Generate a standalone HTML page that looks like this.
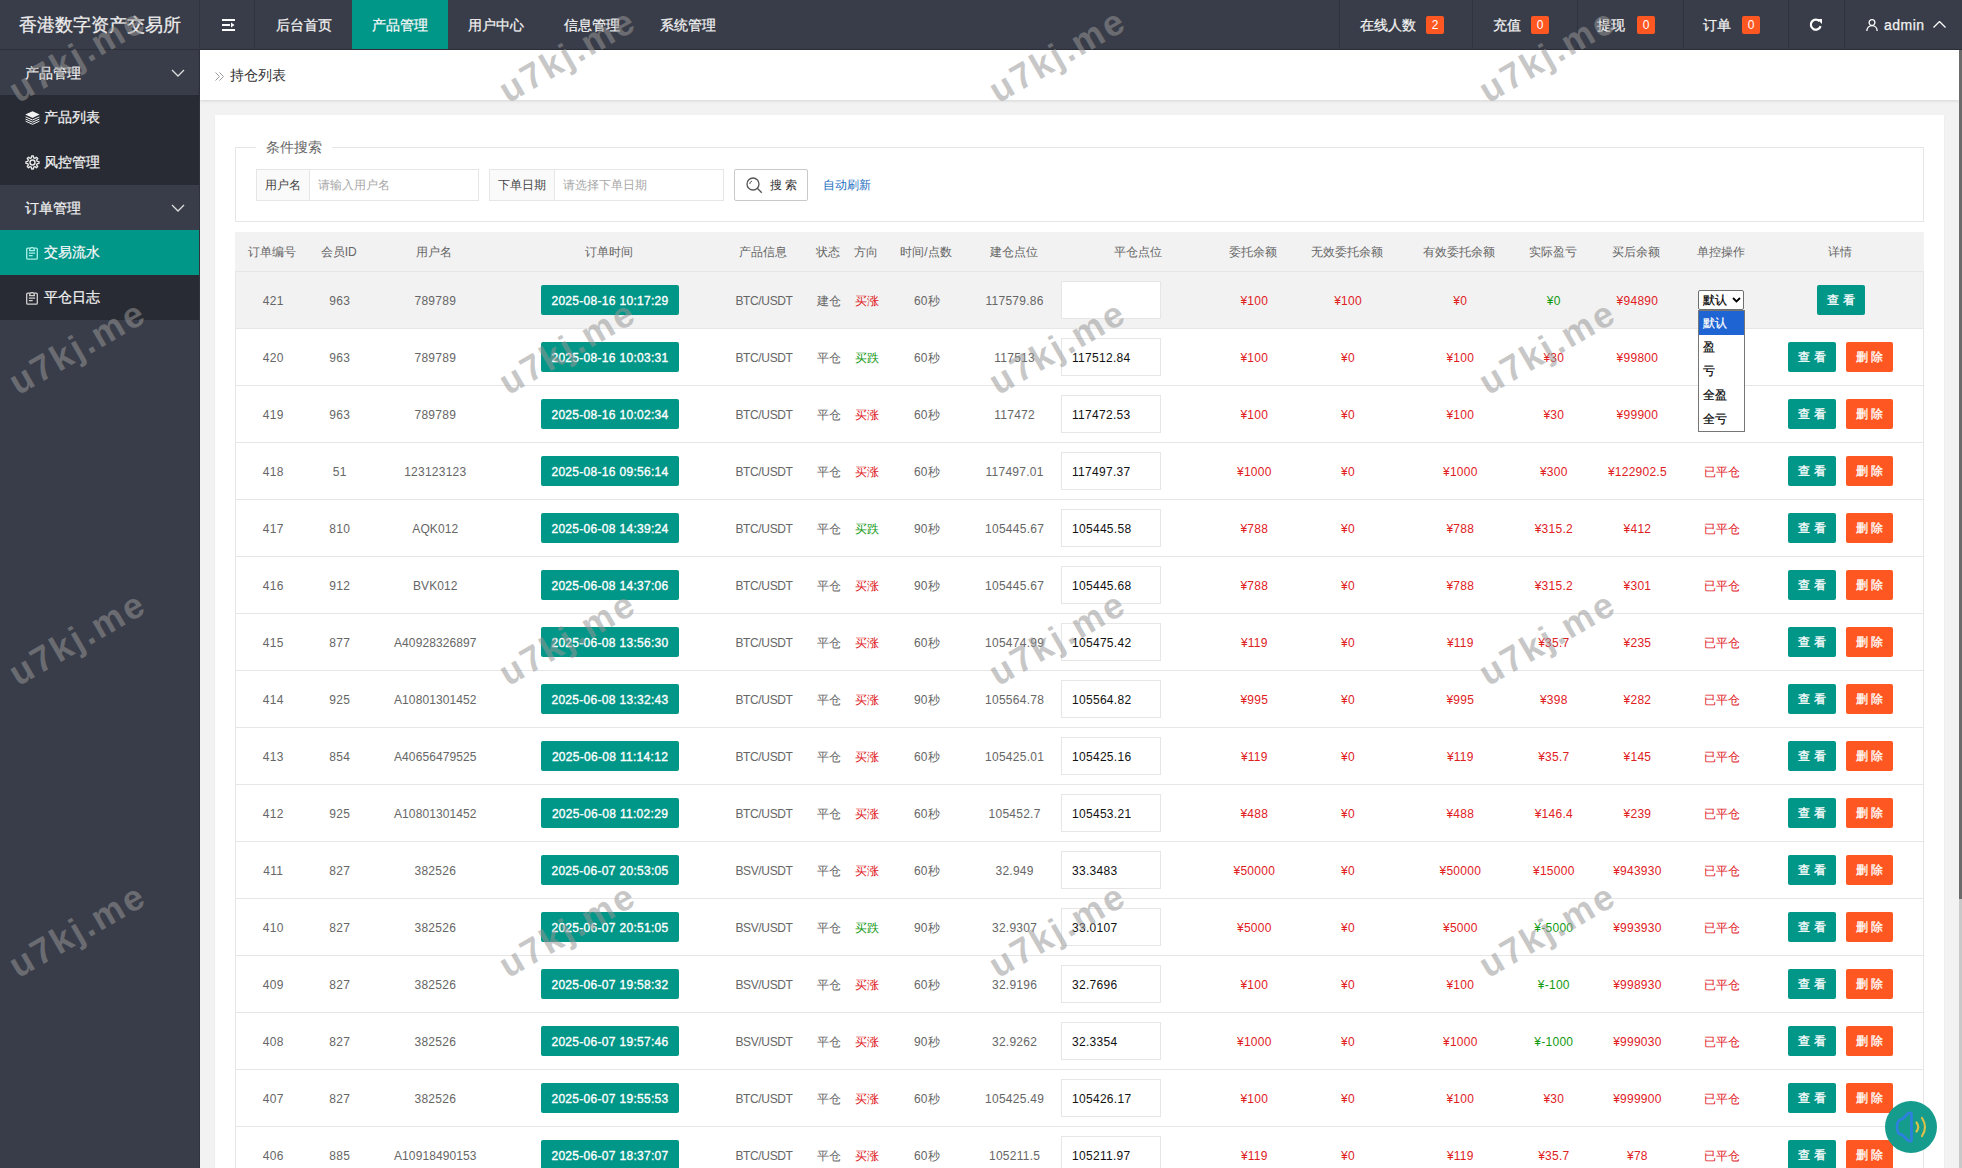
<!DOCTYPE html>
<html><head><meta charset="utf-8">
<style>
*{box-sizing:border-box;margin:0;padding:0}
html,body{width:1962px;height:1168px;overflow:hidden;background:#f2f2f2;font-family:"Liberation Sans",sans-serif;color:#666}
.abs{position:absolute}
#header{position:absolute;left:0;top:0;width:1962px;height:50px;background:#393D49;border-bottom:1px solid #2c2f38}
#logo{position:absolute;left:0;top:1px;width:200px;height:49px;line-height:49px;text-align:center;color:#ececec;font-size:18px;-webkit-text-stroke:.3px #ececec}
.vsep{position:absolute;top:0;width:1px;height:48px;background:#30333e}
.nav{position:absolute;top:0;height:49px;line-height:50px;font-size:14px;color:#f2f2f2;text-align:center;-webkit-text-stroke:.25px #f2f2f2}
.nav.act{background:#009688;color:#fff}
.badge{position:absolute;top:16px;width:18px;height:18px;line-height:18px;background:#FF5722;color:#fff;font-size:12px;text-align:center;border-radius:2px}
#side{position:absolute;left:0;top:50px;width:200px;height:1118px;background:#393D49}
.grp{position:absolute;left:0;width:200px;height:45px;line-height:46px;font-size:14px;color:#f0f0f0;padding-left:25px;-webkit-text-stroke:.25px #f0f0f0}
.child{position:absolute;left:0;width:200px;height:45px;line-height:45px;font-size:14px;color:#f0f0f0;background:#282B33;padding-left:44px;-webkit-text-stroke:.25px #f0f0f0}
.child.act{background:#009688;color:#fff}
.child svg{position:absolute;left:25px}
.chev{position:absolute;left:171px;top:19px}
#crumb{position:absolute;left:200px;top:50px;width:1759px;height:50px;background:#fff;box-shadow:0 1px 3px rgba(0,0,0,.12)}
#crumb .t{position:absolute;left:30px;top:0;line-height:50px;font-size:14px;color:#333}
#card{position:absolute;left:215px;top:115px;width:1729px;height:1100px;background:#fff;box-shadow:0 1px 2px rgba(0,0,0,.05)}
#fs{position:absolute;left:235px;top:147px;width:1689px;height:75px;border:1px solid #e6e6e6}
#legend{position:absolute;left:256px;top:138px;padding:0 10px;background:#fff;font-size:14px;line-height:18px;color:#666}
.ig{position:absolute;top:169px;height:32px;border:1px solid #e6e6e6;background:#fff}
.ig .lab{position:absolute;left:0;top:0;height:30px;line-height:30px;background:#fafafa;border-right:1px solid #e6e6e6;font-size:12px;color:#444;text-align:center}
.ig .ph{position:absolute;top:0;line-height:30px;font-size:12px;color:#a8a8a8}
#sbtn{position:absolute;left:734px;top:169px;width:74px;height:32px;border:1px solid #c9c9c9;border-radius:2px;background:#fff;font-size:12px;color:#333}
#auto{position:absolute;left:823px;top:169px;line-height:32px;font-size:12px;color:#1e6fbf}
#table{position:absolute;left:235px;top:232px;width:1689px;height:960px;border:1px solid #e6e6e6;border-bottom:none;background:#fff}
.thead{position:absolute;left:-1px;top:-1px;width:1689px;height:40px;background:#f2f2f2;border-bottom:1px solid #e6e6e6}
.tr{position:absolute;left:0;width:1687px;height:57px;border-bottom:1px solid #e6e6e6;background:#fff}
.tr.hover{background:#f2f2f2}
.c{position:absolute;top:1px;width:200px;text-align:center;font-size:12px;line-height:56px;white-space:nowrap}
.thead .c{line-height:40px;top:0}
.n{letter-spacing:.25px}
.up{letter-spacing:-.35px}
.al{letter-spacing:.1px}
.red{color:#e0201e}
.green{color:#139a13}
.date{position:absolute;top:13px;width:138px;height:30px;line-height:32px;background:#009688;color:#fff;font-size:12px;text-align:center;border-radius:2px;letter-spacing:.3px;-webkit-text-stroke:.35px #fff}
.inp{position:absolute;top:9px;width:100px;height:38px;line-height:38px;border:1px solid #e6e6e6;background:#fff;color:#111;font-size:12px;padding-left:10px;letter-spacing:.3px}
.btn{position:absolute;top:13px;width:48px;height:30px;line-height:31px;background:#009688;color:#fff;font-size:12px;text-align:center;border-radius:2px;-webkit-text-stroke:.3px #fff}
.btn.del{background:#FF5722;width:47px}
.sel{position:absolute;top:18px;width:46px;height:20px;border:1px solid #6f6f6f;border-radius:2px;background:#fff;color:#000;font-size:12px;line-height:19px;padding-left:4px;-webkit-text-stroke:.2px #000}
.sel svg{position:absolute;left:33px;top:6px}
#dd{position:absolute;left:1698px;top:310px;width:47px;height:122px;border:1px solid #767676;background:#fff;font-size:12px;color:#000}
#dd div{height:24px;line-height:25px;padding-left:4px;-webkit-text-stroke:.2px currentColor}
#dd div.on{background:#1e64d2;color:#fff}
.wm{position:absolute;font-size:36px;font-weight:bold;letter-spacing:2.5px;color:rgba(151,151,151,.53);transform-origin:0 100%;transform:rotate(-30deg);line-height:1;white-space:nowrap;pointer-events:none}
#scroll{position:absolute;left:1959px;top:50px;width:3px;height:849px;background:#6b6b6b}
#track{position:absolute;left:1959px;top:899px;width:3px;height:269px;background:#c8c8c8}
#fab{position:absolute;left:1885px;top:1101px;width:52px;height:52px;border-radius:50%;background:#169c8c}
</style></head>
<body>
<div id="side">
  <div class="grp" style="top:0">产品管理<svg class="chev" width="14" height="8" viewBox="0 0 14 8"><path d="M1 1l6 6 6-6" stroke="#ddd" stroke-width="1.3" fill="none"/></svg></div>
  <div class="child" style="top:45px"><svg width="15" height="14" viewBox="0 0 15 14" style="top:16px"><path d="M7.5 0.3L14.7 3.6 7.5 6.9 0.3 3.6z" fill="#f2f2f2"/><path d="M0.6 5.9l6.9 3.1 6.9-3.1M0.6 8.1l6.9 3.1 6.9-3.1M0.6 10.2l6.9 3.1 6.9-3.1" stroke="#f2f2f2" stroke-width="1" fill="none"/></svg>产品列表</div>
  <div class="child" style="top:90px"><svg width="15" height="15" viewBox="0 0 14.4 14.4" style="left:24.5px;top:15px"><path d="M6.09 2.74 L6.32 0.96 L8.08 0.96 L8.31 2.74 L9.57 3.26 L10.99 2.17 L12.23 3.41 L11.14 4.83 L11.66 6.09 L13.44 6.32 L13.44 8.08 L11.66 8.31 L11.14 9.57 L12.23 10.99 L10.99 12.23 L9.57 11.14 L8.31 11.66 L8.08 13.44 L6.32 13.44 L6.09 11.66 L4.83 11.14 L3.41 12.23 L2.17 10.99 L3.26 9.57 L2.74 8.31 L0.96 8.08 L0.96 6.32 L2.74 6.09 L3.26 4.83 L2.17 3.41 L3.41 2.17 L4.83 3.26z" fill="none" stroke="#e8e8e8" stroke-width="1.3" stroke-linejoin="round"/><circle cx="7.2" cy="7.2" r="2.4" fill="none" stroke="#e8e8e8" stroke-width="1.4"/></svg>风控管理</div>
  <div class="grp" style="top:135px">订单管理<svg class="chev" width="14" height="8" viewBox="0 0 14 8"><path d="M1 1l6 6 6-6" stroke="#ddd" stroke-width="1.3" fill="none"/></svg></div>
  <div class="child act" style="top:180px"><svg width="12" height="13" viewBox="0 0 12 13" style="left:26px;top:17px"><g fill="none" stroke="#a8f0e6" stroke-width="1.3"><path d="M4 1.2H1.8Q0.7 1.2 0.7 2.3V11.2Q0.7 12.2 1.8 12.2H10.2Q11.3 12.2 11.3 11.2V2.3Q11.3 1.2 10.2 1.2H8"/><path d="M3.6 3.6H8.4Q8.4 0.6 6 0.6Q3.6 0.6 3.6 3.6z"/><path d="M2.9 6.2h6.2M2.9 8.7h3.8"/></g></svg>交易流水</div>
  <div class="child" style="top:225px"><svg width="12" height="13" viewBox="0 0 12 13" style="left:26px;top:17px"><g fill="none" stroke="#d0d0d0" stroke-width="1.3"><path d="M4 1.2H1.8Q0.7 1.2 0.7 2.3V11.2Q0.7 12.2 1.8 12.2H10.2Q11.3 12.2 11.3 11.2V2.3Q11.3 1.2 10.2 1.2H8"/><path d="M3.6 3.6H8.4Q8.4 0.6 6 0.6Q3.6 0.6 3.6 3.6z"/><path d="M2.9 6.2h6.2M2.9 8.7h3.8"/></g></svg>平仓日志</div>
  <div class="abs" style="left:199px;top:0;width:1px;height:1118px;background:#30333d"></div>
</div>
<div id="header">
  <div id="logo">香港数字资产交易所</div>
  <div class="vsep" style="left:199px"></div>
  <svg class="abs" style="left:222px;top:19px" width="13" height="12" viewBox="0 0 13 12"><path d="M0 1h13M0 6h8M0 11h13" stroke="#fff" stroke-width="2"/><path d="M9 3.5l3.5 2.5L9 8.5z" fill="#fff"/></svg>
  <div class="vsep" style="left:254px"></div>
  <div class="nav" style="left:256px;width:96px">后台首页</div>
  <div class="nav act" style="left:352px;width:96px">产品管理</div>
  <div class="nav" style="left:448px;width:96px">用户中心</div>
  <div class="nav" style="left:544px;width:96px">信息管理</div>
  <div class="nav" style="left:640px;width:96px">系统管理</div>
  <div class="vsep" style="left:1339px"></div>
  <div class="nav" style="left:1360px">在线人数</div><div class="badge" style="left:1426px">2</div>
  <div class="vsep" style="left:1472px"></div>
  <div class="nav" style="left:1493px">充值</div><div class="badge" style="left:1531px">0</div>
  <div class="vsep" style="left:1577px"></div>
  <div class="nav" style="left:1597px">提现</div><div class="badge" style="left:1637px">0</div>
  <div class="vsep" style="left:1683px"></div>
  <div class="nav" style="left:1703px">订单</div><div class="badge" style="left:1742px">0</div>
  <div class="vsep" style="left:1788px"></div>
  <svg class="abs" style="left:1809px;top:18px" width="14" height="14" viewBox="0 0 14 14"><path d="M11.6 8.2A5 5 0 1 1 10.4 3.2" stroke="#fff" stroke-width="2.2" fill="none"/><path d="M8 1h5v5z" fill="#fff"/></svg>
  <div class="vsep" style="left:1844px"></div>
  <svg class="abs" style="left:1866px;top:19px" width="12" height="12" viewBox="0 0 12 12"><g fill="none" stroke="#fff" stroke-width="1.3"><circle cx="6" cy="3.6" r="2.9"/><path d="M0.8 12c0-3.2 2.3-5.4 5.2-5.4s5.2 2.2 5.2 5.4"/></g></svg>
  <div class="nav" style="left:1884px;letter-spacing:.5px">admin</div>
  <svg class="abs" style="left:1933px;top:21px" width="13" height="7" viewBox="0 0 13 7"><path d="M0.5 6.5l6-6 6 6" stroke="#fff" stroke-width="1.3" fill="none"/></svg>
</div>
<div id="crumb"><svg class="abs" style="left:15px;top:22px" width="9" height="9" viewBox="0 0 9 9"><path d="M0.5 0.5l4 4-4 4M4.5 0.5l4 4-4 4" stroke="#999" stroke-width="1" fill="none"/></svg><span class="t">持仓列表</span></div>
<div id="card"></div>
<div id="fs"></div>
<div id="legend">条件搜索</div>
<div class="ig" style="left:256px;width:223px"><span class="lab" style="width:53px">用户名</span><span class="ph" style="left:61px">请输入用户名</span></div>
<div class="ig" style="left:489px;width:235px"><span class="lab" style="width:65px">下单日期</span><span class="ph" style="left:73px">请选择下单日期</span></div>
<div id="sbtn"><svg class="abs" style="left:11px;top:7px" width="17" height="17" viewBox="0 0 17 17"><g fill="none" stroke="#555" stroke-width="1.3"><circle cx="7" cy="7" r="6"/><path d="M11.3 11.3l4.5 4.5"/><path d="M3.8 7a3.2 3.2 0 0 1 2.2-3" stroke-width="1"/></g></svg><span class="abs" style="left:35px;top:0;line-height:30px">搜 索</span></div>
<div id="auto">自动刷新</div>
<div id="table">
<div class="thead"><span class="c h" style="left:-62.8px">订单编号</span><span class="c h" style="left:3.7px">会员ID</span><span class="c h" style="left:99.3px">用户名</span><span class="c h" style="left:274.0px">订单时间</span><span class="c h" style="left:428.0px">产品信息</span><span class="c h" style="left:493.0px">状态</span><span class="c h" style="left:530.6px">方向</span><span class="c h" style="left:591.0px">时间/点数</span><span class="c h" style="left:678.6px">建仓点位</span><span class="c h" style="left:802.7px">平仓点位</span><span class="c h" style="left:918.3px">委托余额</span><span class="c h" style="left:1012.0px">无效委托余额</span><span class="c h" style="left:1124.3px">有效委托余额</span><span class="c h" style="left:1217.8px">实际盈亏</span><span class="c h" style="left:1301.4px">买后余额</span><span class="c h" style="left:1385.5px">单控操作</span><span class="c h" style="left:1505.0px">详情</span></div>
<div class="tr hover" style="top:39px"><span class="c n" style="left:-62.8px">421</span><span class="c n" style="left:3.7px">963</span><span class="c n" style="left:99.3px">789789</span><span class="date" style="left:305px">2025-08-16 10:17:29</span><span class="c up" style="left:428.0px">BTC/USDT</span><span class="c " style="left:493.0px">建仓</span><span class="c red" style="left:530.6px">买涨</span><span class="c n" style="left:591.0px">60秒</span><span class="c n" style="left:678.6px">117579.86</span><span class="inp" style="left:825px"></span><span class="c n red" style="left:918.3px">¥100</span><span class="c n red" style="left:1012.0px">¥100</span><span class="c n red" style="left:1124.3px">¥0</span><span class="c n green" style="left:1217.8px">¥0</span><span class="c n red" style="left:1301.4px">¥94890</span><span class="sel" style="left:1462px">默认<svg width="9" height="6" viewBox="0 0 9 6"><path d="M1 1l3.5 3.5L8 1" stroke="#000" stroke-width="1.8" fill="none"/></svg></span><span class="btn" style="left:1581px">查 看</span></div>
<div class="tr" style="top:96px"><span class="c n" style="left:-62.8px">420</span><span class="c n" style="left:3.7px">963</span><span class="c n" style="left:99.3px">789789</span><span class="date" style="left:305px">2025-08-16 10:03:31</span><span class="c up" style="left:428.0px">BTC/USDT</span><span class="c " style="left:493.0px">平仓</span><span class="c green" style="left:530.6px">买跌</span><span class="c n" style="left:591.0px">60秒</span><span class="c n" style="left:678.6px">117513</span><span class="inp" style="left:825px">117512.84</span><span class="c n red" style="left:918.3px">¥100</span><span class="c n red" style="left:1012.0px">¥0</span><span class="c n red" style="left:1124.3px">¥100</span><span class="c n red" style="left:1217.8px">¥30</span><span class="c n red" style="left:1301.4px">¥99800</span><span class="c red" style="left:1385.5px">已平仓</span><span class="btn" style="left:1552px">查 看</span><span class="btn del" style="left:1610px">删 除</span></div>
<div class="tr" style="top:153px"><span class="c n" style="left:-62.8px">419</span><span class="c n" style="left:3.7px">963</span><span class="c n" style="left:99.3px">789789</span><span class="date" style="left:305px">2025-08-16 10:02:34</span><span class="c up" style="left:428.0px">BTC/USDT</span><span class="c " style="left:493.0px">平仓</span><span class="c red" style="left:530.6px">买涨</span><span class="c n" style="left:591.0px">60秒</span><span class="c n" style="left:678.6px">117472</span><span class="inp" style="left:825px">117472.53</span><span class="c n red" style="left:918.3px">¥100</span><span class="c n red" style="left:1012.0px">¥0</span><span class="c n red" style="left:1124.3px">¥100</span><span class="c n red" style="left:1217.8px">¥30</span><span class="c n red" style="left:1301.4px">¥99900</span><span class="c red" style="left:1385.5px">已平仓</span><span class="btn" style="left:1552px">查 看</span><span class="btn del" style="left:1610px">删 除</span></div>
<div class="tr" style="top:210px"><span class="c n" style="left:-62.8px">418</span><span class="c n" style="left:3.7px">51</span><span class="c n" style="left:99.3px">123123123</span><span class="date" style="left:305px">2025-08-16 09:56:14</span><span class="c up" style="left:428.0px">BTC/USDT</span><span class="c " style="left:493.0px">平仓</span><span class="c red" style="left:530.6px">买涨</span><span class="c n" style="left:591.0px">60秒</span><span class="c n" style="left:678.6px">117497.01</span><span class="inp" style="left:825px">117497.37</span><span class="c n red" style="left:918.3px">¥1000</span><span class="c n red" style="left:1012.0px">¥0</span><span class="c n red" style="left:1124.3px">¥1000</span><span class="c n red" style="left:1217.8px">¥300</span><span class="c n red" style="left:1301.4px">¥122902.5</span><span class="c red" style="left:1385.5px">已平仓</span><span class="btn" style="left:1552px">查 看</span><span class="btn del" style="left:1610px">删 除</span></div>
<div class="tr" style="top:267px"><span class="c n" style="left:-62.8px">417</span><span class="c n" style="left:3.7px">810</span><span class="c al" style="left:99.3px">AQK012</span><span class="date" style="left:305px">2025-06-08 14:39:24</span><span class="c up" style="left:428.0px">BTC/USDT</span><span class="c " style="left:493.0px">平仓</span><span class="c green" style="left:530.6px">买跌</span><span class="c n" style="left:591.0px">90秒</span><span class="c n" style="left:678.6px">105445.67</span><span class="inp" style="left:825px">105445.58</span><span class="c n red" style="left:918.3px">¥788</span><span class="c n red" style="left:1012.0px">¥0</span><span class="c n red" style="left:1124.3px">¥788</span><span class="c n red" style="left:1217.8px">¥315.2</span><span class="c n red" style="left:1301.4px">¥412</span><span class="c red" style="left:1385.5px">已平仓</span><span class="btn" style="left:1552px">查 看</span><span class="btn del" style="left:1610px">删 除</span></div>
<div class="tr" style="top:324px"><span class="c n" style="left:-62.8px">416</span><span class="c n" style="left:3.7px">912</span><span class="c al" style="left:99.3px">BVK012</span><span class="date" style="left:305px">2025-06-08 14:37:06</span><span class="c up" style="left:428.0px">BTC/USDT</span><span class="c " style="left:493.0px">平仓</span><span class="c red" style="left:530.6px">买涨</span><span class="c n" style="left:591.0px">90秒</span><span class="c n" style="left:678.6px">105445.67</span><span class="inp" style="left:825px">105445.68</span><span class="c n red" style="left:918.3px">¥788</span><span class="c n red" style="left:1012.0px">¥0</span><span class="c n red" style="left:1124.3px">¥788</span><span class="c n red" style="left:1217.8px">¥315.2</span><span class="c n red" style="left:1301.4px">¥301</span><span class="c red" style="left:1385.5px">已平仓</span><span class="btn" style="left:1552px">查 看</span><span class="btn del" style="left:1610px">删 除</span></div>
<div class="tr" style="top:381px"><span class="c n" style="left:-62.8px">415</span><span class="c n" style="left:3.7px">877</span><span class="c al" style="left:99.3px">A40928326897</span><span class="date" style="left:305px">2025-06-08 13:56:30</span><span class="c up" style="left:428.0px">BTC/USDT</span><span class="c " style="left:493.0px">平仓</span><span class="c red" style="left:530.6px">买涨</span><span class="c n" style="left:591.0px">60秒</span><span class="c n" style="left:678.6px">105474.99</span><span class="inp" style="left:825px">105475.42</span><span class="c n red" style="left:918.3px">¥119</span><span class="c n red" style="left:1012.0px">¥0</span><span class="c n red" style="left:1124.3px">¥119</span><span class="c n red" style="left:1217.8px">¥35.7</span><span class="c n red" style="left:1301.4px">¥235</span><span class="c red" style="left:1385.5px">已平仓</span><span class="btn" style="left:1552px">查 看</span><span class="btn del" style="left:1610px">删 除</span></div>
<div class="tr" style="top:438px"><span class="c n" style="left:-62.8px">414</span><span class="c n" style="left:3.7px">925</span><span class="c al" style="left:99.3px">A10801301452</span><span class="date" style="left:305px">2025-06-08 13:32:43</span><span class="c up" style="left:428.0px">BTC/USDT</span><span class="c " style="left:493.0px">平仓</span><span class="c red" style="left:530.6px">买涨</span><span class="c n" style="left:591.0px">90秒</span><span class="c n" style="left:678.6px">105564.78</span><span class="inp" style="left:825px">105564.82</span><span class="c n red" style="left:918.3px">¥995</span><span class="c n red" style="left:1012.0px">¥0</span><span class="c n red" style="left:1124.3px">¥995</span><span class="c n red" style="left:1217.8px">¥398</span><span class="c n red" style="left:1301.4px">¥282</span><span class="c red" style="left:1385.5px">已平仓</span><span class="btn" style="left:1552px">查 看</span><span class="btn del" style="left:1610px">删 除</span></div>
<div class="tr" style="top:495px"><span class="c n" style="left:-62.8px">413</span><span class="c n" style="left:3.7px">854</span><span class="c al" style="left:99.3px">A40656479525</span><span class="date" style="left:305px">2025-06-08 11:14:12</span><span class="c up" style="left:428.0px">BTC/USDT</span><span class="c " style="left:493.0px">平仓</span><span class="c red" style="left:530.6px">买涨</span><span class="c n" style="left:591.0px">60秒</span><span class="c n" style="left:678.6px">105425.01</span><span class="inp" style="left:825px">105425.16</span><span class="c n red" style="left:918.3px">¥119</span><span class="c n red" style="left:1012.0px">¥0</span><span class="c n red" style="left:1124.3px">¥119</span><span class="c n red" style="left:1217.8px">¥35.7</span><span class="c n red" style="left:1301.4px">¥145</span><span class="c red" style="left:1385.5px">已平仓</span><span class="btn" style="left:1552px">查 看</span><span class="btn del" style="left:1610px">删 除</span></div>
<div class="tr" style="top:552px"><span class="c n" style="left:-62.8px">412</span><span class="c n" style="left:3.7px">925</span><span class="c al" style="left:99.3px">A10801301452</span><span class="date" style="left:305px">2025-06-08 11:02:29</span><span class="c up" style="left:428.0px">BTC/USDT</span><span class="c " style="left:493.0px">平仓</span><span class="c red" style="left:530.6px">买涨</span><span class="c n" style="left:591.0px">60秒</span><span class="c n" style="left:678.6px">105452.7</span><span class="inp" style="left:825px">105453.21</span><span class="c n red" style="left:918.3px">¥488</span><span class="c n red" style="left:1012.0px">¥0</span><span class="c n red" style="left:1124.3px">¥488</span><span class="c n red" style="left:1217.8px">¥146.4</span><span class="c n red" style="left:1301.4px">¥239</span><span class="c red" style="left:1385.5px">已平仓</span><span class="btn" style="left:1552px">查 看</span><span class="btn del" style="left:1610px">删 除</span></div>
<div class="tr" style="top:609px"><span class="c n" style="left:-62.8px">411</span><span class="c n" style="left:3.7px">827</span><span class="c n" style="left:99.3px">382526</span><span class="date" style="left:305px">2025-06-07 20:53:05</span><span class="c up" style="left:428.0px">BSV/USDT</span><span class="c " style="left:493.0px">平仓</span><span class="c red" style="left:530.6px">买涨</span><span class="c n" style="left:591.0px">60秒</span><span class="c n" style="left:678.6px">32.949</span><span class="inp" style="left:825px">33.3483</span><span class="c n red" style="left:918.3px">¥50000</span><span class="c n red" style="left:1012.0px">¥0</span><span class="c n red" style="left:1124.3px">¥50000</span><span class="c n red" style="left:1217.8px">¥15000</span><span class="c n red" style="left:1301.4px">¥943930</span><span class="c red" style="left:1385.5px">已平仓</span><span class="btn" style="left:1552px">查 看</span><span class="btn del" style="left:1610px">删 除</span></div>
<div class="tr" style="top:666px"><span class="c n" style="left:-62.8px">410</span><span class="c n" style="left:3.7px">827</span><span class="c n" style="left:99.3px">382526</span><span class="date" style="left:305px">2025-06-07 20:51:05</span><span class="c up" style="left:428.0px">BSV/USDT</span><span class="c " style="left:493.0px">平仓</span><span class="c green" style="left:530.6px">买跌</span><span class="c n" style="left:591.0px">90秒</span><span class="c n" style="left:678.6px">32.9307</span><span class="inp" style="left:825px">33.0107</span><span class="c n red" style="left:918.3px">¥5000</span><span class="c n red" style="left:1012.0px">¥0</span><span class="c n red" style="left:1124.3px">¥5000</span><span class="c n green" style="left:1217.8px">¥-5000</span><span class="c n red" style="left:1301.4px">¥993930</span><span class="c red" style="left:1385.5px">已平仓</span><span class="btn" style="left:1552px">查 看</span><span class="btn del" style="left:1610px">删 除</span></div>
<div class="tr" style="top:723px"><span class="c n" style="left:-62.8px">409</span><span class="c n" style="left:3.7px">827</span><span class="c n" style="left:99.3px">382526</span><span class="date" style="left:305px">2025-06-07 19:58:32</span><span class="c up" style="left:428.0px">BSV/USDT</span><span class="c " style="left:493.0px">平仓</span><span class="c red" style="left:530.6px">买涨</span><span class="c n" style="left:591.0px">60秒</span><span class="c n" style="left:678.6px">32.9196</span><span class="inp" style="left:825px">32.7696</span><span class="c n red" style="left:918.3px">¥100</span><span class="c n red" style="left:1012.0px">¥0</span><span class="c n red" style="left:1124.3px">¥100</span><span class="c n green" style="left:1217.8px">¥-100</span><span class="c n red" style="left:1301.4px">¥998930</span><span class="c red" style="left:1385.5px">已平仓</span><span class="btn" style="left:1552px">查 看</span><span class="btn del" style="left:1610px">删 除</span></div>
<div class="tr" style="top:780px"><span class="c n" style="left:-62.8px">408</span><span class="c n" style="left:3.7px">827</span><span class="c n" style="left:99.3px">382526</span><span class="date" style="left:305px">2025-06-07 19:57:46</span><span class="c up" style="left:428.0px">BSV/USDT</span><span class="c " style="left:493.0px">平仓</span><span class="c red" style="left:530.6px">买涨</span><span class="c n" style="left:591.0px">90秒</span><span class="c n" style="left:678.6px">32.9262</span><span class="inp" style="left:825px">32.3354</span><span class="c n red" style="left:918.3px">¥1000</span><span class="c n red" style="left:1012.0px">¥0</span><span class="c n red" style="left:1124.3px">¥1000</span><span class="c n green" style="left:1217.8px">¥-1000</span><span class="c n red" style="left:1301.4px">¥999030</span><span class="c red" style="left:1385.5px">已平仓</span><span class="btn" style="left:1552px">查 看</span><span class="btn del" style="left:1610px">删 除</span></div>
<div class="tr" style="top:837px"><span class="c n" style="left:-62.8px">407</span><span class="c n" style="left:3.7px">827</span><span class="c n" style="left:99.3px">382526</span><span class="date" style="left:305px">2025-06-07 19:55:53</span><span class="c up" style="left:428.0px">BTC/USDT</span><span class="c " style="left:493.0px">平仓</span><span class="c red" style="left:530.6px">买涨</span><span class="c n" style="left:591.0px">60秒</span><span class="c n" style="left:678.6px">105425.49</span><span class="inp" style="left:825px">105426.17</span><span class="c n red" style="left:918.3px">¥100</span><span class="c n red" style="left:1012.0px">¥0</span><span class="c n red" style="left:1124.3px">¥100</span><span class="c n red" style="left:1217.8px">¥30</span><span class="c n red" style="left:1301.4px">¥999900</span><span class="c red" style="left:1385.5px">已平仓</span><span class="btn" style="left:1552px">查 看</span><span class="btn del" style="left:1610px">删 除</span></div>
<div class="tr" style="top:894px"><span class="c n" style="left:-62.8px">406</span><span class="c n" style="left:3.7px">885</span><span class="c al" style="left:99.3px">A10918490153</span><span class="date" style="left:305px">2025-06-07 18:37:07</span><span class="c up" style="left:428.0px">BTC/USDT</span><span class="c " style="left:493.0px">平仓</span><span class="c red" style="left:530.6px">买涨</span><span class="c n" style="left:591.0px">60秒</span><span class="c n" style="left:678.6px">105211.5</span><span class="inp" style="left:825px">105211.97</span><span class="c n red" style="left:918.3px">¥119</span><span class="c n red" style="left:1012.0px">¥0</span><span class="c n red" style="left:1124.3px">¥119</span><span class="c n red" style="left:1217.8px">¥35.7</span><span class="c n red" style="left:1301.4px">¥78</span><span class="c red" style="left:1385.5px">已平仓</span><span class="btn" style="left:1552px">查 看</span><span class="btn del" style="left:1610px">删 除</span></div>
</div>
<div id="dd"><div class="on">默认</div><div>盈</div><div>亏</div><div>全盈</div><div>全亏</div></div>
<div id="fab"><svg class="abs" style="left:0;top:0" width="52" height="52" viewBox="0 0 52 52"><path d="M26.5 12.5L26.5 39.5Q25 41 23 39.5L17.5 34Q12 33.5 12 26Q12 18.5 17.5 18L23 12.5Q25 11 26.5 12.5z" fill="none" stroke="#2f7fe0" stroke-width="2.6" stroke-linejoin="round"/><path d="M31.5 21.5Q35 26 31.5 30.5M37 17Q43 26 37 35" stroke="#d8c04a" stroke-width="2.2" fill="none" stroke-linecap="round"/></svg></div>
<div id="scroll"></div><div id="track"></div>
<div class="wm" style="left:20.5px;top:72.5px">u7kj.me</div>
<div class="wm" style="left:510.8px;top:72.5px">u7kj.me</div>
<div class="wm" style="left:1001.1px;top:72.5px">u7kj.me</div>
<div class="wm" style="left:1491.4px;top:72.5px">u7kj.me</div>
<div class="wm" style="left:20.5px;top:365.0px">u7kj.me</div>
<div class="wm" style="left:510.8px;top:365.0px">u7kj.me</div>
<div class="wm" style="left:1001.1px;top:365.0px">u7kj.me</div>
<div class="wm" style="left:1491.4px;top:365.0px">u7kj.me</div>
<div class="wm" style="left:20.5px;top:656.0px">u7kj.me</div>
<div class="wm" style="left:510.8px;top:656.0px">u7kj.me</div>
<div class="wm" style="left:1001.1px;top:656.0px">u7kj.me</div>
<div class="wm" style="left:1491.4px;top:656.0px">u7kj.me</div>
<div class="wm" style="left:20.5px;top:948.0px">u7kj.me</div>
<div class="wm" style="left:510.8px;top:948.0px">u7kj.me</div>
<div class="wm" style="left:1001.1px;top:948.0px">u7kj.me</div>
<div class="wm" style="left:1491.4px;top:948.0px">u7kj.me</div>
</body></html>
